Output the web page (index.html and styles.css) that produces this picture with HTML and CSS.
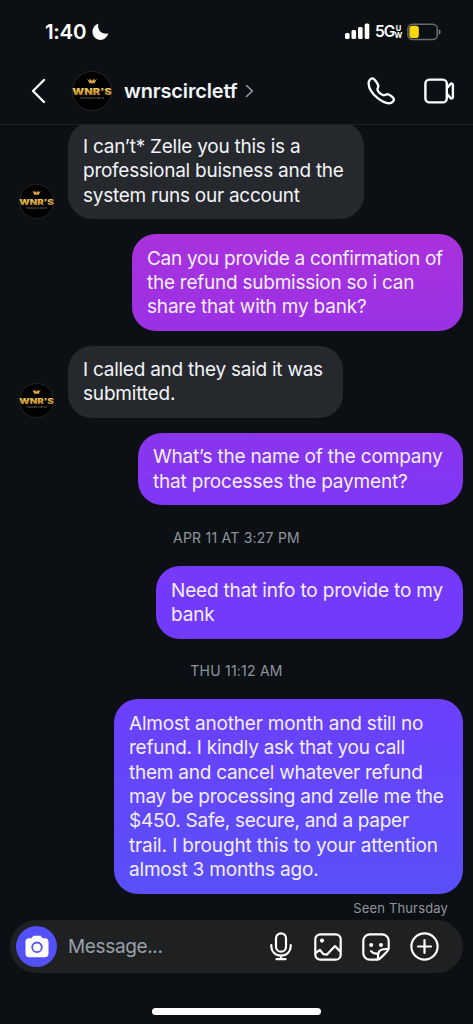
FILE: index.html
```html
<!DOCTYPE html>
<html lang="en">
<head>
<meta charset="utf-8">
<title>wnrscircletf</title>
<link rel="stylesheet" href="styles.css">
</head>
<body>
<svg class="defs" width="0" height="0" aria-hidden="true">
  <defs>
    <linearGradient id="gold" x1="0" y1="0" x2="0" y2="1">
      <stop offset="0" stop-color="#f8dc7c"/><stop offset=".5" stop-color="#dca63a"/><stop offset="1" stop-color="#a97220"/>
    </linearGradient>
    <symbol id="brand" viewBox="0 0 40 40">
      <circle cx="20" cy="20" r="19.5" fill="#000" stroke="#24272b" stroke-width="1"/>
      <path d="M15 7.500l2.200 2 .8-1.800 2 2.300 2-2.300.8 1.800 2.200-2-2.600 5-1.200-.6-1.200.7-1.200-.7-1.200.6z" fill="#dca63a"/>
      <text x=".3" y="23.500" font-size="8.600" font-weight="900" textLength="39.400" lengthAdjust="spacingAndGlyphs" fill="url(#gold)">WNR'S</text>
      <text x="8" y="28.400" font-size="2.600" textLength="24" lengthAdjust="spacingAndGlyphs" fill="#8a806a">TRADING CIRCLE</text>
    </symbol>
  </defs>
</svg>
<div class="phone">
  <div class="status">
    <span class="time">1:40</span>
    <svg class="moon" width="17" height="18" viewBox="0 0 17 18"><path d="M6.300.8C5.400 5.600 7.500 11.500 16.300 10.600 14.800 14.700 12 16.900 8.500 16.900 4 16.900.5 13.400.5 9 .5 5.100 2.800 1.900 6.300.8z" fill="#fff"/></svg>
    <svg class="signal" width="25" height="17" viewBox="0 0 25 17" fill="#fff"><rect x="0" y="10" width="4.600" height="6" rx="1.500"/><rect x="6.500" y="7" width="4.600" height="9" rx="1.500"/><rect x="13" y="4" width="4.600" height="12" rx="1.500"/><rect x="19.700" y=".5" width="4.600" height="15.500" rx="1.500"/></svg>
    <span class="net">5G</span>
    <span class="uw"><span>U</span><span>W</span></span>
    <svg class="battery" width="34" height="18" viewBox="0 0 34 18"><rect x=".9" y="1.200" width="29.400" height="15.400" rx="4.500" fill="none" stroke="#66696d" stroke-width="1.500"/><rect x="2.400" y="2.800" width="9.400" height="12.200" rx="2.800" fill="#ffd60a"/><path d="M31.800 6.200c2.400.8 2.400 4.600 0 5.400z" fill="#7b7e82"/></svg>
  </div>
  <header class="bar">
    <svg class="back" width="15" height="26" viewBox="0 0 15 26"><path d="M13 2L2 13l11 11" fill="none" stroke="#fff" stroke-width="2.300" stroke-linecap="round" stroke-linejoin="round"/></svg>
    <svg class="face-lg" width="40" height="40"><use href="#brand"/></svg>
    <span class="name">wnrscircletf</span>
    <svg class="chev" width="9" height="14" viewBox="0 0 9 14"><path d="M1.500 1.500L7.300 7l-5.800 5.500" fill="none" stroke="#9a9fa6" stroke-width="1.500" stroke-linecap="round" stroke-linejoin="round"/></svg>
    <svg class="call" width="30" height="30" viewBox="0 0 30 30"><path d="M7.200 2.600C5 1.800 2.400 4.500 2.600 7.600c.3 5.500 4.400 10.700 8.800 14.300 4.200 3.400 9 5.900 12.600 5.300 2.200-.4 4.300-2.900 3.900-4.200-.5-1.500-4.200-4.300-5.700-4.700-1.900-.4-3.200 1.200-4.800.9-2.100-.4-5.400-3.300-5.900-5.200-.4-1.500 1-2.500.8-4.200C12 8 8.800 3.200 7.200 2.600z" fill="none" stroke="#fff" stroke-width="2.300" stroke-linejoin="round"/></svg>
    <svg class="video" width="31" height="26" viewBox="0 0 31 26" fill="none" stroke="#fff" stroke-width="2.400" stroke-linejoin="round"><rect x="1.400" y="1.600" width="21.400" height="22.800" rx="4"/><path d="M23 10l3.400-3.900c1-1 2.500-.6 2.500.9v12c0 1.500-1.500 1.900-2.500.9L23 16"/></svg>
  </header>
  <main class="thread">
    <div class="row in">
      <svg class="face" width="35" height="35"><use href="#brand"/></svg>
      <p class="bubble b1">I can’t* Zelle you this is a<br>professional buisness and the<br>system runs our account</p>
    </div>
    <div class="row out"><p class="bubble b2"><span class="tight">Can you provide a confirmation of</span><br>the refund submission so i can<br><span class="loose">share that with my bank?</span></p></div>
    <div class="row in">
      <svg class="face" width="35" height="35"><use href="#brand"/></svg>
      <p class="bubble b3">I called and they said it was<br><span class="loose">submitted.</span></p>
    </div>
    <div class="row out"><p class="bubble b4">What’s the name of the company<br>that processes the payment?</p></div>
    <div class="stamp">APR 11 AT 3:27 PM</div>
    <div class="row out"><p class="bubble b5">Need that info to provide to my<br>bank</p></div>
    <div class="stamp">THU 11:12 AM</div>
    <div class="row out"><p class="bubble b6"><span class="loose">Almost another month and still no</span><br>refund. I kindly ask that you call<br>them and cancel whatever refund<br>may be processing and zelle me the<br><span class="tight">$450. Safe, secure, and a paper</span><br><span class="looser">trail. I brought this to your attention</span><br><span class="loose">almost 3 months ago.</span></p></div>
    <div class="seen">Seen Thursday</div>
  </main>
  <div class="composer">
    <span class="cam"><svg width="24" height="23" viewBox="0 0 24 23"><path d="M8.500.8h7l2.200 2.400h2.100A3.700 3.700 0 0 1 23.500 7v11.500a3.700 3.700 0 0 1-3.700 3.700H4.200A3.700 3.700 0 0 1 .5 18.500V7a3.700 3.700 0 0 1 3.700-3.800h2.100z" fill="#fff"/><circle cx="12" cy="12.300" r="4.800" fill="none" stroke="#5350f5" stroke-width="1.800"/></svg></span>
    <span class="hint">Message...</span>
    <svg class="mic" width="22" height="29" viewBox="0 0 22 29" fill="none" stroke="#fff" stroke-width="2.200" stroke-linecap="round"><rect x="6" y="1.300" width="10" height="18.400" rx="5"/><path d="M1.300 13v1.500c0 5 4 9.100 9.700 9.100s9.700-4.100 9.700-9.100V13M11 23.600v3.600M6.500 27.200h9"/></svg>
    <svg class="pic" width="28" height="28" viewBox="0 0 28 28" fill="none" stroke="#fff" stroke-width="2.200" stroke-linejoin="round"><rect x="1.300" y="1.300" width="25.400" height="25.400" rx="5"/><circle cx="8" cy="7.600" r="2.100" fill="#fff" stroke="none"/><path d="M1.500 20.200l4.300-3.400 3.500 4.300 3.700.5 8-8.500 5.500 5.500"/></svg>
    <svg class="stick" width="28" height="28" viewBox="0 0 28 28" fill="none" stroke="#fff" stroke-width="2.200" stroke-linejoin="round" stroke-linecap="round"><path d="M15.500 26.700H7.800a6.500 6.500 0 0 1-6.500-6.500V7.800a6.500 6.500 0 0 1 6.500-6.500h12.400a6.500 6.500 0 0 1 6.500 6.500v7.700c0 2-9.200 11.200-11.200 11.200zM15.800 26.500c.4-2-.3-5.400 1.300-8 2-2.800 6-2.300 9.500-2.600M9 18.200c1.500 2 4 2.800 6.800 2.300"/><circle cx="9.200" cy="12" r="2" fill="#fff" stroke="none"/><circle cx="19" cy="12" r="2" fill="#fff" stroke="none"/></svg>
    <svg class="plus" width="29" height="29" viewBox="0 0 29 29" fill="none" stroke="#fff" stroke-width="2.200" stroke-linecap="round"><circle cx="14.500" cy="14.500" r="13.100"/><path d="M14.500 8v13M8 14.500h13"/></svg>
  </div>
  <div class="home"></div>
</div>
</body>
</html>
```
FILE: styles.css
```css
* { box-sizing: border-box; }
body { margin: 0; background: #0c1014; }
svg { display: block; flex: none; }
.defs { position: absolute; }
.phone {
  width: 473px; height: 1024px; overflow: hidden;
  display: flex; flex-direction: column;
  background: #0c1014; color: #f2f4f7;
  font-family: Inter, "Liberation Sans", sans-serif;
}
.status { height: 62px; flex: none; display: flex; align-items: center; padding: 1px 0 0 45px; color: #fff; }
.time { font-size: 20.500px; font-weight: 600; line-height: 24px; width: 42px; white-space: nowrap; letter-spacing: -.3px; }
.moon { margin-left: 5px; }
.signal { margin-left: 236px; }
.net { margin-left: 5px; width: 20px; font-size: 15.500px; font-weight: 600; letter-spacing: -1.100px; white-space: nowrap; }
.uw { display: flex; flex-direction: column; align-items: center; width: 7px; font-size: 7.500px; font-weight: 700; line-height: 7px; }
.battery { margin-left: 5px; }
.bar { height: 63px; flex: none; display: flex; align-items: center; padding: 0 0 5px 31px; border-bottom: 1px solid #1d2125; }
.face-lg { margin-left: 26px; }
.name { margin-left: 12px; width: 113px; font-size: 20px; font-weight: 600; letter-spacing: -.150px; white-space: nowrap; }
.chev { margin-left: 8px; }
.call { margin-left: 112px; }
.video { margin-left: 28px; }
.thread { height: 795px; flex: none; overflow: hidden; padding-right: 10px; display: flex; flex-direction: column; }
.row { display: flex; flex: none; margin-bottom: 14.650px; }
.row.out { justify-content: flex-end; }
.row.in { align-items: flex-end; padding-left: 19px; }
.row.in:first-child { margin-top: -2.700px; }
.face { margin-right: 14px; }
.bubble { margin: 0; padding: 12.600px 0 11.400px 15px; border-radius: 24px; font-size: 19px; line-height: 24.330px; letter-spacing: -.250px; white-space: nowrap; }
.in .bubble { background: #25282d; }
.out .bubble { color: #f4efff; }
.tight { letter-spacing: -.290px; }
.loose { letter-spacing: -.190px; }
.looser { letter-spacing: -.130px; }
.b1 { width: 296px; }
.out .b2 { width: 331px; background: linear-gradient(#a932dc, #9a31e5); }
.b3 { width: 275px; }
.out .b4 { width: 325px; letter-spacing: -.190px; background: linear-gradient(#8b35ed, #7f37f5); }
.out .b5 { width: 307px; letter-spacing: -.180px; background: linear-gradient(#7639fa, #703bfd); }
.out .b6 { width: 349px; background: linear-gradient(#6c3ffd, #5950f8); }
.stamp { flex: none; height: 46px; text-align: center; font-size: 14px; letter-spacing: .230px; line-height: 36.500px; color: #8f959d; padding-left: 10px; }
.seen { flex: none; text-align: right; padding-right: 15px; font-size: 13px; letter-spacing: .150px; line-height: 16px; color: #8f959d; margin-top: -8px; }
.composer { width: 453px; height: 53px; flex: none; margin-left: 10px; border-radius: 27px; background: #1f2021; display: flex; align-items: center; padding-left: 6px; }
.cam { width: 41px; height: 41px; flex: none; border-radius: 50%; background: #5350f8; display: flex; align-items: center; justify-content: center; }
.hint { margin-left: 11px; width: 202px; font-size: 19px; letter-spacing: -.350px; color: #98a0ab; }
.pic { margin-left: 22px; }
.stick { margin-left: 20px; }
.plus { margin-left: 20px; }
.home { flex: none; width: 169px; height: 7px; border-radius: 4px; background: #fff; margin: 35px 0 0 152px; }
```
